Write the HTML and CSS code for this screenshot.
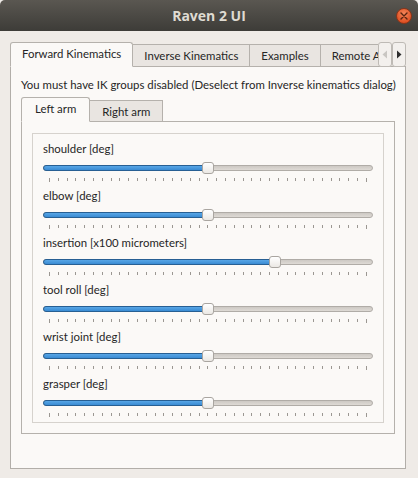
FILE: index.html
```html
<!DOCTYPE html>
<html>
<head>
<meta charset="utf-8">
<link rel="stylesheet" href="styles.css">
</head>
<body>
<div class="window">
  <div class="titlebar">
    <span class="title">Raven 2 UI</span>
    <span class="close"><svg width="8" height="8" viewBox="0 0 8 8"><path d="M1 1L7 7M7 1L1 7" stroke="#5a2410" stroke-width="1.4" stroke-linecap="round"/></svg></span>
  </div>
  <div class="content">
    <div class="tabwidget">
      <div class="tabbar">
        <div class="tabs">
          <div class="tab active">Forward Kinematics</div>
          <div class="tab">Inverse Kinematics</div>
          <div class="tab">Examples</div>
          <div class="tab">Remote API</div>
        </div>
        <div class="scroll-btn"><svg width="6" height="9" viewBox="0 0 6 9"><path d="M5 0.5L0.5 4.5L5 8.5Z" fill="#c9c6c2"/></svg></div>
        <div class="scroll-btn"><svg width="6" height="9" viewBox="0 0 6 9"><path d="M1 0.5L5.5 4.5L1 8.5Z" fill="#2e2e2e"/></svg></div>
      </div>
      <div class="panel">
        <p class="note">You must have IK groups disabled (Deselect from Inverse kinematics dialog)</p>
        <div class="subtabbar">
          <div class="subtab active">Left arm</div>
          <div class="subtab">Right arm</div>
        </div>
        <div class="subpanel">
          <div class="group">
            <div class="row">
              <div class="label">shoulder [deg]</div>
              <div class="slider" style="--pos:0.5"><div class="groove"></div><div class="fill"></div><div class="handle"></div></div>
              <div class="ticks"><i></i><i></i><i></i><i></i><i></i><i></i><i></i><i></i><i></i><i></i><i></i><i></i><i></i><i></i><i></i><i></i><i></i><i></i><i></i><i></i><i></i><i></i><i></i><i></i><i></i><i></i><i></i><i></i><i></i><i></i><i></i><i></i><i></i><i></i><i></i><i></i><i></i></div>
            </div>
            <div class="row">
              <div class="label">elbow [deg]</div>
              <div class="slider" style="--pos:0.5"><div class="groove"></div><div class="fill"></div><div class="handle"></div></div>
              <div class="ticks"><i></i><i></i><i></i><i></i><i></i><i></i><i></i><i></i><i></i><i></i><i></i><i></i><i></i><i></i><i></i><i></i><i></i><i></i><i></i><i></i><i></i><i></i><i></i><i></i><i></i><i></i><i></i><i></i><i></i><i></i><i></i><i></i><i></i><i></i><i></i><i></i><i></i></div>
            </div>
            <div class="row">
              <div class="label">insertion [x100 micrometers]</div>
              <div class="slider" style="--pos:0.71"><div class="groove"></div><div class="fill"></div><div class="handle"></div></div>
              <div class="ticks"><i></i><i></i><i></i><i></i><i></i><i></i><i></i><i></i><i></i><i></i><i></i><i></i><i></i><i></i><i></i><i></i><i></i><i></i><i></i><i></i><i></i><i></i><i></i><i></i><i></i><i></i><i></i><i></i><i></i><i></i><i></i><i></i><i></i><i></i><i></i><i></i><i></i></div>
            </div>
            <div class="row">
              <div class="label">tool roll [deg]</div>
              <div class="slider" style="--pos:0.5"><div class="groove"></div><div class="fill"></div><div class="handle"></div></div>
              <div class="ticks"><i></i><i></i><i></i><i></i><i></i><i></i><i></i><i></i><i></i><i></i><i></i><i></i><i></i><i></i><i></i><i></i><i></i><i></i><i></i><i></i><i></i><i></i><i></i><i></i><i></i><i></i><i></i><i></i><i></i><i></i><i></i><i></i><i></i><i></i><i></i><i></i><i></i></div>
            </div>
            <div class="row">
              <div class="label">wrist joint [deg]</div>
              <div class="slider" style="--pos:0.5"><div class="groove"></div><div class="fill"></div><div class="handle"></div></div>
              <div class="ticks"><i></i><i></i><i></i><i></i><i></i><i></i><i></i><i></i><i></i><i></i><i></i><i></i><i></i><i></i><i></i><i></i><i></i><i></i><i></i><i></i><i></i><i></i><i></i><i></i><i></i><i></i><i></i><i></i><i></i><i></i><i></i><i></i><i></i><i></i><i></i><i></i><i></i></div>
            </div>
            <div class="row">
              <div class="label">grasper [deg]</div>
              <div class="slider" style="--pos:0.5"><div class="groove"></div><div class="fill"></div><div class="handle"></div></div>
              <div class="ticks"><i></i><i></i><i></i><i></i><i></i><i></i><i></i><i></i><i></i><i></i><i></i><i></i><i></i><i></i><i></i><i></i><i></i><i></i><i></i><i></i><i></i><i></i><i></i><i></i><i></i><i></i><i></i><i></i><i></i><i></i><i></i><i></i><i></i><i></i><i></i><i></i><i></i></div>
            </div>
          </div>
        </div>
      </div>
    </div>
  </div>
</div>
</body>
</html>
```

FILE: styles.css
```css
* { box-sizing: border-box; }
html, body { margin: 0; padding: 0; }
body {
  background: #efebe7;
  font-family: "Lato", "Noto Sans", sans-serif;
  font-size: 11.4px;
  color: #262626;
}
.window {
  width: 418px;
  height: 478px;
  display: flex;
  flex-direction: column;
  background: #efebe7;
  overflow: hidden;
}
.titlebar {
  height: 31px;
  flex: none;
  position: relative;
  display: flex;
  align-items: center;
  justify-content: center;
  background: linear-gradient(#5a5751, #3d3c38);
  border-radius: 5px 5px 0 0;
}
.title {
  color: #dfdbd2;
  font-weight: bold;
  font-size: 14px;
  font-family: "Open Sans", "Noto Sans", sans-serif;
}
.close {
  position: absolute;
  right: 6px;
  top: 8px;
  width: 16px;
  height: 16px;
  border-radius: 50%;
  background: radial-gradient(circle at 50% 35%, #f5875a, #de4f22 75%);
  border: 1px solid #8a3418;
  display: flex;
  align-items: center;
  justify-content: center;
}
.content {
  flex: 1;
  min-height: 0;
  padding: 11px 12px 10px 10px;
  display: flex;
}
.tabwidget {
  flex: 1;
  min-width: 0;
  display: flex;
  flex-direction: column;
}
.tabbar {
  display: flex;
  height: 24px;
  position: relative;
  z-index: 1;
}
.tabs {
  flex: 1;
  min-width: 0;
  display: flex;
  align-items: flex-end;
  overflow: hidden;
  height: 25px;
}
.tab {
  flex: none;
  height: 23px;
  padding: 0 11px;
  border: 1px solid #b5b1ac;
  border-left-width: 0;
  background: #e9e5e1;
  display: flex;
  align-items: center;
  white-space: nowrap;
  color: #262626;
}
.tab.active {
  height: 25px;
  border-left-width: 1px;
  border-bottom-color: #fbf9f7;
  background: #fbf9f7;
  border-radius: 3px 3px 0 0;
  padding-bottom: 2px;
}
.scroll-btn {
  flex: none;
  width: 14px;
  height: 25px;
  border: 1px solid #bebab5;
  border-radius: 3px;
  background: #f3f0ed;
  display: flex;
  align-items: center;
  justify-content: center;
}
.panel {
  flex: 1;
  min-width: 0;
  border: 1px solid #b2aea9;
  background: #fbf9f7;
  padding: 8px 10px 34px 10px;
  display: flex;
  flex-direction: column;
}
.note {
  margin: 0;
  height: 20px;
  line-height: 20px;
  white-space: nowrap;
}
.subtabbar {
  margin-top: 3px;
  display: flex;
  align-items: flex-end;
  height: 24px;
  position: relative;
  z-index: 1;
  margin-bottom: -1px;
}
.subtab {
  height: 22px;
  padding: 0 12px;
  border: 1px solid #b5b1ac;
  border-left-width: 0;
  background: #e9e5e1;
  display: flex;
  align-items: center;
  white-space: nowrap;
}
.subtab.active {
  height: 25px;
  padding: 0 13px 2px;
  border-left-width: 1px;
  background: #fbf9f7;
  border-bottom-color: #fbf9f7;
  border-radius: 3px 3px 0 0;
}
.subpanel {
  flex: 1;
  border: 1px solid #b5b1ac;
  padding: 11px 10px 10px 10px;
  display: flex;
}
.group {
  flex: 1;
  min-width: 0;
  border: 1px solid #d6d2cd;
  padding: 7px 10px 5px 10px;
}
.row {
  margin-bottom: 6px;
}
.row:last-child { margin-bottom: 0; }
.label {
  height: 16px;
  line-height: 16px;
  white-space: nowrap;
}
.slider {
  position: relative;
  height: 16px;
  margin-top: 3px;
}
.groove {
  position: absolute;
  left: 0;
  right: 0;
  top: 5px;
  height: 6px;
  border-radius: 3px;
  background: linear-gradient(#cdc9c4, #dedad5);
  border: 1px solid #b0aca7;
}
.fill {
  position: absolute;
  left: 0;
  top: 5px;
  height: 6px;
  width: calc(6px + var(--pos) * (100% - 12px));
  border-radius: 3px;
  background: linear-gradient(#58a6e6, #3a8bd3);
  border: 1px solid #275f93;
}
.handle {
  position: absolute;
  top: 2px;
  left: calc(var(--pos) * (100% - 12px));
  width: 12px;
  height: 12px;
  border-radius: 3px;
  border: 1px solid #a9a5a0;
  background: linear-gradient(#ffffff, #ebe8e4);
}
.ticks {
  margin: 2px 6px 0 6px;
  height: 4px;
  display: flex;
  justify-content: space-between;
  align-items: flex-start;
}
.ticks i {
  display: block;
  width: 1px;
  height: 3px;
  background: #9b9792;
}
.ticks i:first-child, .ticks i:last-child { height: 4px; }
```
